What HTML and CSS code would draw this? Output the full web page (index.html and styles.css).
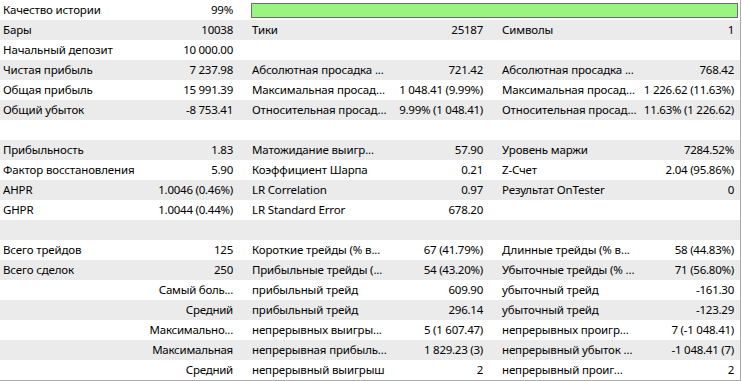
FILE: index.html
```html
<!DOCTYPE html>
<html lang="ru">
<head>
<meta charset="utf-8">
<title>Отчёт тестера</title>
<link rel="stylesheet" href="styles.css">
</head>
<body>
<div class="report">
  <div class="row">
    <div class="lbl">Качество истории</div><div class="val">99%</div>
    <div class="barcell"><div class="bar"></div></div>
  </div>
  <div class="row alt">
    <div class="lbl">Бары</div><div class="val">10038</div>
    <div class="lbl">Тики</div><div class="val">25187</div>
    <div class="lbl">Символы</div><div class="val last">1</div>
  </div>
  <div class="row">
    <div class="lbl">Начальный депозит</div><div class="val">10 000.00</div>
    <div class="lbl"></div><div class="val"></div>
    <div class="lbl"></div><div class="val last"></div>
  </div>
  <div class="row alt">
    <div class="lbl">Чистая прибыль</div><div class="val">7 237.98</div>
    <div class="lbl">Абсолютная просадка ...</div><div class="val">721.42</div>
    <div class="lbl">Абсолютная просадка ...</div><div class="val last">768.42</div>
  </div>
  <div class="row">
    <div class="lbl">Общая прибыль</div><div class="val">15 991.39</div>
    <div class="lbl">Максимальная просад...</div><div class="val">1 048.41 (9.99%)</div>
    <div class="lbl">Максимальная просад...</div><div class="val last">1 226.62 (11.63%)</div>
  </div>
  <div class="row alt">
    <div class="lbl">Общий убыток</div><div class="val">-8 753.41</div>
    <div class="lbl">Относительная просад...</div><div class="val">9.99% (1 048.41)</div>
    <div class="lbl">Относительная просад...</div><div class="val last">11.63% (1 226.62)</div>
  </div>
  <div class="row"></div>
  <div class="row alt">
    <div class="lbl">Прибыльность</div><div class="val">1.83</div>
    <div class="lbl">Матожидание выигр...</div><div class="val">57.90</div>
    <div class="lbl">Уровень маржи</div><div class="val last">7284.52%</div>
  </div>
  <div class="row">
    <div class="lbl">Фактор восстановления</div><div class="val">5.90</div>
    <div class="lbl">Коэффициент Шарпа</div><div class="val">0.21</div>
    <div class="lbl">Z-Счет</div><div class="val last">2.04 (95.86%)</div>
  </div>
  <div class="row alt">
    <div class="lbl">AHPR</div><div class="val">1.0046 (0.46%)</div>
    <div class="lbl">LR Correlation</div><div class="val">0.97</div>
    <div class="lbl">Результат OnTester</div><div class="val last">0</div>
  </div>
  <div class="row">
    <div class="lbl">GHPR</div><div class="val">1.0044 (0.44%)</div>
    <div class="lbl">LR Standard Error</div><div class="val">678.20</div>
    <div class="lbl"></div><div class="val last"></div>
  </div>
  <div class="row alt"></div>
  <div class="row">
    <div class="lbl">Всего трейдов</div><div class="val">125</div>
    <div class="lbl">Короткие трейды (% в...</div><div class="val">67 (41.79%)</div>
    <div class="lbl">Длинные трейды (% в...</div><div class="val last">58 (44.83%)</div>
  </div>
  <div class="row alt">
    <div class="lbl">Всего сделок</div><div class="val">250</div>
    <div class="lbl">Прибыльные трейды (...</div><div class="val">54 (43.20%)</div>
    <div class="lbl">Убыточные трейды (% ...</div><div class="val last">71 (56.80%)</div>
  </div>
  <div class="row">
    <div class="lbl"></div><div class="val">Самый боль...</div>
    <div class="lbl">прибыльный трейд</div><div class="val">609.90</div>
    <div class="lbl">убыточный трейд</div><div class="val last">-161.30</div>
  </div>
  <div class="row alt">
    <div class="lbl"></div><div class="val">Средний</div>
    <div class="lbl">прибыльный трейд</div><div class="val">296.14</div>
    <div class="lbl">убыточный трейд</div><div class="val last">-123.29</div>
  </div>
  <div class="row">
    <div class="lbl"></div><div class="val">Максимально...</div>
    <div class="lbl">непрерывных выигры...</div><div class="val">5 (1 607.47)</div>
    <div class="lbl">непрерывных проигр...</div><div class="val last">7 (-1 048.41)</div>
  </div>
  <div class="row alt">
    <div class="lbl"></div><div class="val">Максимальная</div>
    <div class="lbl">непрерывная прибыль...</div><div class="val">1 829.23 (3)</div>
    <div class="lbl">непрерывный убыток ...</div><div class="val last">-1 048.41 (7)</div>
  </div>
  <div class="row">
    <div class="lbl"></div><div class="val">Средний</div>
    <div class="lbl">непрерывный выигрыш</div><div class="val">2</div>
    <div class="lbl">непрерывный проиг...</div><div class="val last">2</div>
  </div>
</div>
</body>
</html>
```

FILE: styles.css
```css
html, body {
  margin: 0;
  padding: 0;
  background: #ffffff;
}

.report {
  width: 740px;
  border-right: 1px solid #a9a9a9;
  border-bottom: 1px solid #a9a9a9;
  font-family: "Noto Sans", "DejaVu Sans", sans-serif;
  font-size: 11.5px;
  color: #000000;
}

.row {
  display: grid;
  grid-template-columns: 145px 104px 146px 104px 146px 95px;
  height: 20px;
  line-height: 20px;
  background: #ffffff;
}

.row.alt {
  background: #ebebeb;
}

.lbl {
  padding-left: 3px;
  white-space: nowrap;
  overflow: hidden;
  letter-spacing: -0.15px;
}

.val {
  display: flex;
  justify-content: flex-end;
  padding-right: 16px;
  white-space: nowrap;
  letter-spacing: -0.25px;
}

.val.last {
  padding-right: 6px;
}

.barcell {
  grid-column: 3 / 7;
  padding: 3px 2px 2px 2px;
}

.bar {
  height: 13px;
  background: #99f57f;
  border: 1px solid #6e6e6e;
}
```
